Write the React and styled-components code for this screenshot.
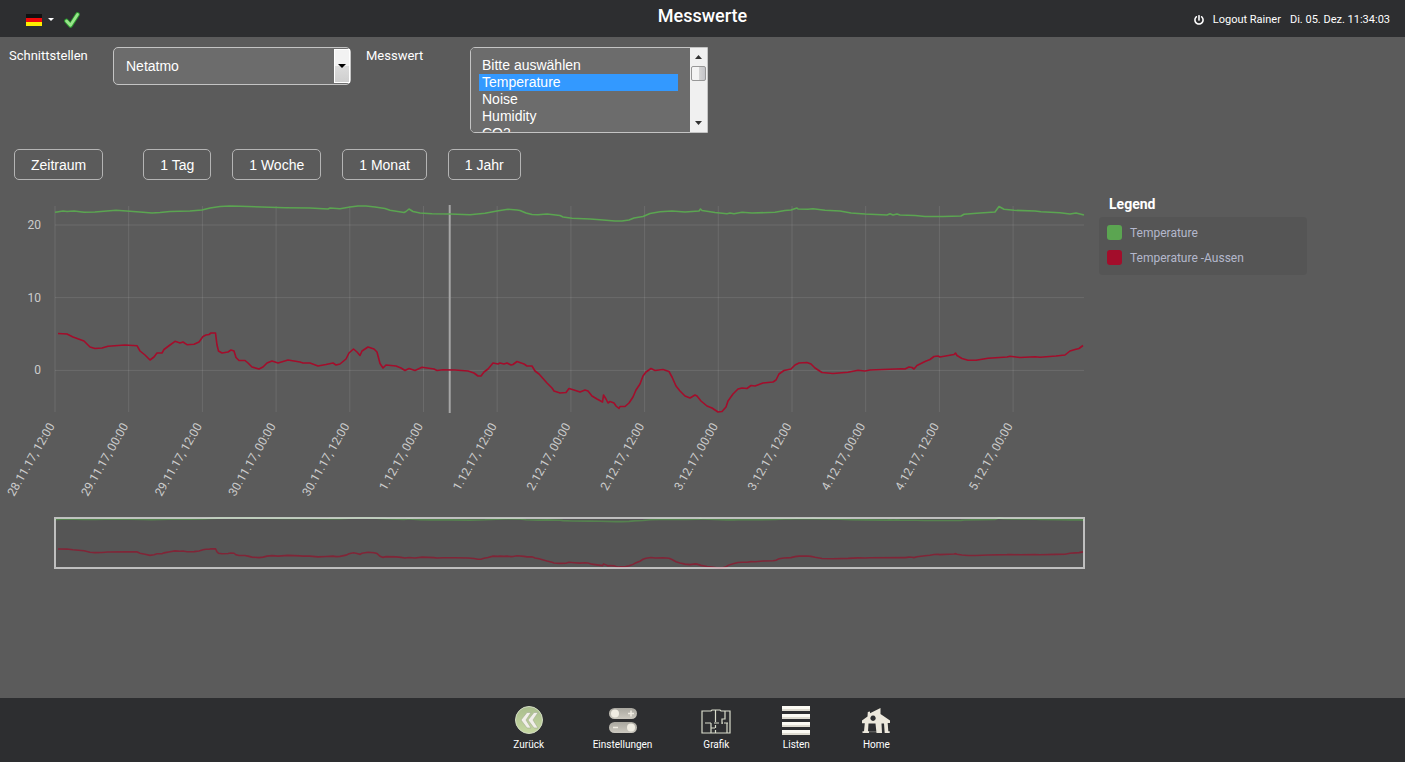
import React, { useState } from "react";
import styled, { createGlobalStyle } from "styled-components";
import { FaPowerOff } from "react-icons/fa";

const temperature =
  "55,17.3 57,17 63,16 67,16.5 74,16 84,17.3 95,17 116,15.3 130,16.3 143,17.3 152,18 160,17.5 170,16.5 190,16 202,15 210,13 220,11.5 230,11 240,11.3 262,12 285,12.7 310,13 328,14 330,13 340,13.7 350,12 358,11 366,11 375,12 385,13.5 390,15.3 404,17.5 406,16.5 409,14 413,16.5 420,18 432,18.7 450,19 470,19.7 485,18.3 497,16 508,14.3 517,15 520,15.5 526,18 532,19.5 538,19.7 547,19 560,20.5 563,22 572,23.3 590,24 600,24.7 615,26 622,26 629,25 634,23 643,21.5 650,18.5 660,16.7 672,16 685,17 699,16 700.5,14 702,15.5 715,17.5 727,18.7 730,18 734,18.7 742,17.3 752,18 775,17.3 785,15.5 791,15 797,13 798,14 808,14.3 813,13.7 825,15.2 840,16 851,18 865,19 887,20 890,18.7 893,20 897,19 900,20 915,20.5 925,21.5 943,21.5 961,21 964,19.3 980,18 995,17 999,11.5 1004,14.3 1014,15.3 1035,16 1041,16.8 1060,17.7 1070,19 1076,18 1084,20";

const outside =
  "58,138.5 67,139 73,142 84,146 90,152 95,153.5 102,153 108,151.3 125,150 137,150.7 140,156 145,160 150,165 154,162 157,158 162,158 164,154.5 170,150 175,146.3 180,148 183,147 187,149.7 194,149.3 199,147 203,141.5 206,140 209,139.5 211,138 215.5,138 217,150 218.5,156 222,158 228,157 231,155 234,156 236,162.5 239,165.5 245,165.5 248,168 252,172 259,174 263,172 267,168 272,166 278,168 288,165 300,167 303,168 310,168 318,171 326,169.5 333,168 336,170 340,169 346,164 349,158 353.5,154 357,157 360,160.5 362,156 368,152 374,154 377,157 380,168.5 383,173 386,170 396,171 401,173 405,175.5 409,173.5 415,175.5 422,172.3 434,174 437,175.5 443,174.8 455,175 468,176 474,178 478,181 481,181 484,177 488,174 493,168 498,169 500,168 504,169 507,168 511,170 513,169.5 517,166.5 524,169 527,171 532,171 535,176 539,179 547,188 552,193 554,196 560,198 566,197.5 569,193.5 574,195 580,197 585,195 588,196 592,201 597,204 602.5,207 603.5,200 606,204 608,208 610,206.5 614,208 616,211 619,213.5 620,211.5 625,211.5 629,208 633,202 636,195 640,189 643,181 646,177 651,173.5 655,175.5 663,174.5 669,176.5 672,182 676,191 680,196 685,201 690,203 695,200 697,201 701,206 707,211 712,213 718,217 722,216.5 726,212 728,206 733,199 738,194 742,193 747,193.5 751,190.5 755,191 763,188 773,187 776,185 779,179 784,175.5 791,174 795,170 799,168 807,167.5 811,169 815,173 822,177.5 833,178.5 848,177.3 858,175.3 865,176 870,175 902,173.7 905,174 909,172 912,172.5 914,174 917,170.5 925,166.5 930,164.5 934,161.5 938,161 940,162 954,159.5 955.5,158 957,160.5 962,163.5 968,165.3 976,165.3 988,163.3 1007,162 1010,161.3 1020,162.5 1035,161.7 1040,162.3 1056,161 1065,160 1070,156 1075,154.5 1079,153.5 1083,150.5";

const series = [
  { name: "Temperature", color: "#5ba551", points: temperature },
  { name: "Temperature -Aussen", color: "#a30d2b", points: outside },
];

const days = ["28.11.17", "29.11.17", "30.11.17", "1.12.17", "2.12.17", "3.12.17", "4.12.17", "5.12.17"];
const ticks = days
  .flatMap((day) => [`${day}, 00:00`, `${day}, 12:00`])
  .slice(1, 15)
  .map((label, i) => ({ label, x: 55 + i * 73.7 }));

const values = ["Bitte auswählen", "Temperature", "Noise", "Humidity", "CO2"];
const ranges = ["1 Tag", "1 Woche", "1 Monat", "1 Jahr"];

function Chart() {
  return (
    <Plot viewBox="0 0 1090 385" role="img" aria-label="Verlauf der Messwerte">
      <g stroke="#fff" strokeOpacity="0.1">
        {ticks.map((t) => (
          <line key={t.label} x1={t.x} x2={t.x} y1="11" y2="217" />
        ))}
        {[30, 102.6, 175.4].map((y) => (
          <line key={y} x1="55" x2="1084" y1={y} y2={y} />
        ))}
      </g>
      <line x1="449.7" x2="449.7" y1="10" y2="218" stroke="#a6a6a6" strokeWidth="2" />
      {series.map((s) => (
        <polyline key={s.name} points={s.points} fill="none" stroke={s.color} strokeWidth="1.6" strokeLinejoin="round" />
      ))}
      <AxisText>
        <text x="41" y="34">20</text>
        <text x="41" y="107">10</text>
        <text x="41" y="179">0</text>
        {ticks.map((t) => (
          <text key={t.label} transform={`translate(${t.x} 231) rotate(-60)`}>
            {t.label}
          </text>
        ))}
      </AxisText>

      {/* overview with the selected range */}
      <g transform="translate(0 320.3) scale(1 0.243)" opacity="0.65">
        {series.map((s) => (
          <polyline key={s.name} points={s.points} fill="none" stroke={s.color} strokeWidth="1.6" vectorEffect="non-scaling-stroke" />
        ))}
      </g>
      <rect x="55" y="323" width="1029" height="50" fill="#000" fillOpacity="0.06" stroke="#fff" strokeOpacity="0.62" strokeWidth="2" />
    </Plot>
  );
}

function BackIcon() {
  return (
    <svg width="30" height="30" viewBox="0 0 30 30">
      <defs>
        <linearGradient id="back" x2="0" y2="1">
          <stop offset="0" stopColor="#a9bd8d" />
          <stop offset="1" stopColor="#c6d8a2" />
        </linearGradient>
      </defs>
      <circle cx="15" cy="15" r="13.5" fill="url(#back)" stroke="#d3dcc4" />
      <path d="M13 7.500h4l-5 7.500 5 8h-4l-6-8zM20 7.500h4l-5 7.500 5 8h-4l-6-8z" fill="#f1efe9" stroke="#a3ad90" strokeWidth="0.6" />
    </svg>
  );
}

function SettingsIcon() {
  return (
    <svg width="30" height="30" viewBox="0 0 30 30">
      <defs>
        <linearGradient id="pill" x2="0" y2="1">
          <stop offset="0" stopColor="#a9a79f" />
          <stop offset="1" stopColor="#cbc8bf" />
        </linearGradient>
      </defs>
      <rect x="1" y="3" width="28" height="11" rx="5.5" fill="url(#pill)" />
      <rect x="1" y="17" width="28" height="11" rx="5.5" fill="url(#pill)" />
      <circle cx="7" cy="8.5" r="4" fill="#efece2" />
      <circle cx="23" cy="22.5" r="4" fill="#efece2" />
      <path d="M20 8.500h6M23 5.500v6M5 22.500h5" stroke="#efece2" strokeWidth="1.5" />
    </svg>
  );
}

function PlanIcon() {
  return (
    <svg width="30" height="30" viewBox="0 0 30 30" fill="none" stroke="#d9dccb" strokeWidth="1.2">
      <path d="M1 6h9l1-1h8l1 1h9v22H1z" />
      <path d="M14.500 5v12M14.500 20v1M24 6v8h-3v5M4 18h6M10 18v10M13 18h5M14.500 21v2M10 23h4M14.500 25v3M26 18v10M21 18h1M23 18h4" />
    </svg>
  );
}

function ListIcon() {
  return (
    <svg width="30" height="30" viewBox="0 0 30 30">
      {[1, 9, 17, 25].map((y) => (
        <g key={y}>
          <path d={`M1 ${y}h28v5H1z`} fill="#fbfaf3" />
          <path d={`M1 ${y + 3}h28v2H1z`} fill="#dedbd0" />
        </g>
      ))}
    </svg>
  );
}

function HomeIcon() {
  return (
    <svg width="30" height="30" viewBox="0 0 30 30" fill="#ece8dc">
      <path
        fillRule="evenodd"
        d="M19.500 3v6l9.500 6.500V18h-2.300l.6 8.200h1.400V28h-5L23 18.500h-2.500L21 28h-5.500l-1-9.500h-7L7 26.200h1V28H1.500v-1.800H3l.8-8H1V15.500l5.500-4L6.800 7l2.200-.6v1.800zM12 10.500a2.700 2.700 0 1 0 .1 0z"
      />
      <path d="M7 26.500h9v.7H7z" opacity="0.5" />
    </svg>
  );
}

const menu = [
  { label: "Zurück", icon: <BackIcon /> },
  { label: "Einstellungen", icon: <SettingsIcon /> },
  { label: "Grafik", icon: <PlanIcon /> },
  { label: "Listen", icon: <ListIcon /> },
  { label: "Home", icon: <HomeIcon /> },
];

function App() {
  const [source, setSource] = useState("Netatmo");
  const [selected, setSelected] = useState(["Temperature"]);

  const handleValues = (e) => {
    setSelected([...e.target.selectedOptions].map((o) => o.value));
  };

  return (
    <Page>
      <GlobalStyle />
      <Header>
        <HeaderLeft>
          <LanguageButton type="button" aria-label="Sprache">
            <svg width="16" height="12" viewBox="0 0 16 12">
              <path d="M0 0h16v4H0z" fill="#111" />
              <path d="M0 4h16v4H0z" fill="#f00a0a" />
              <path d="M0 8h16v4H0z" fill="#ffee00" />
            </svg>
            <Caret />
          </LanguageButton>
          <svg width="16" height="16" viewBox="0 0 16 16">
            <path d="M2.500 9L6.500 13.500 13.500 2.500" fill="none" stroke="#2c9a30" strokeWidth="4.6" strokeLinejoin="round" strokeLinecap="round" />
            <path d="M2.500 9L6.500 13.200 13.500 2.500" fill="none" stroke="#98e58a" strokeWidth="2.8" strokeLinejoin="round" strokeLinecap="round" />
          </svg>
        </HeaderLeft>
        <Title>Messwerte</Title>
        <HeaderRight>
          <Logout href="#logout">
            <FaPowerOff size={10} />
            Logout Rainer
          </Logout>
          <span>Di. 05. Dez. 11:34:03</span>
        </HeaderRight>
      </Header>

      <Main>
        <Filters>
          <Label htmlFor="source">Schnittstellen</Label>
          <Field>
            <Select id="source" value={source} onChange={(e) => setSource(e.target.value)}>
              <option>Netatmo</option>
            </Select>
            <SelectArrow>
              <svg width="8" height="4" viewBox="0 0 8 4">
                <path d="M0 0h8L4 4z" />
              </svg>
            </SelectArrow>
          </Field>
          <Label htmlFor="values">Messwert</Label>
          <Field>
            <ListBox id="values" multiple value={selected} onChange={handleValues}>
              {values.map((v) => (
                <option key={v}>{v}</option>
              ))}
            </ListBox>
            <Scrollbar aria-hidden="true">
              <svg width="7" height="4" viewBox="0 0 7 4">
                <path d="M0 4h7L3.500 0z" fill="#333" />
              </svg>
              <Thumb />
              <svg width="7" height="4" viewBox="0 0 7 4">
                <path d="M0 0h7L3.500 4z" fill="#333" />
              </svg>
            </Scrollbar>
          </Field>
        </Filters>

        <Ranges>
          <RangeButton type="button" $first>Zeitraum</RangeButton>
          {ranges.map((r) => (
            <RangeButton key={r} type="button">{r}</RangeButton>
          ))}
        </Ranges>

        <Content>
          <Chart />
          <Legend>
            <LegendTitle>Legend</LegendTitle>
            <LegendList>
              {series.map((s) => (
                <LegendItem key={s.name}>
                  <Swatch $color={s.color} />
                  {s.name}
                </LegendItem>
              ))}
            </LegendList>
          </Legend>
        </Content>
      </Main>

      <Footer>
        {menu.map((m) => (
          <MenuLink key={m.label} href={`#${m.label}`}>
            {m.icon}
            {m.label}
          </MenuLink>
        ))}
      </Footer>
    </Page>
  );
}

export default App;

const GlobalStyle = createGlobalStyle`
  * {
    box-sizing: border-box;
  }

  body {
    margin: 0;
    background: #5b5b5b;
    color: #fff;
    font-family: Roboto, sans-serif;
    font-size: 13px;
  }
`;

const Page = styled.div`
  display: flex;
  flex-direction: column;
  min-height: 100vh;
`;

const Header = styled.header`
  display: grid;
  grid-template-columns: 1fr auto 1fr;
  height: 37px;
  background: #2d2e30;
`;

const HeaderLeft = styled.div`
  display: flex;
  align-items: center;
  gap: 10px;
  padding: 2px 0 0 26px;
`;

const LanguageButton = styled.button`
  display: flex;
  align-items: center;
  gap: 6px;
  padding: 0;
  border: 0;
  background: none;
`;

const Caret = styled.span`
  border: 3px solid transparent;
  border-top-color: #fff;
  border-bottom: 0;
`;

const Title = styled.h1`
  margin: 0;
  font-size: 18px;
  font-weight: 500;
  line-height: 32px;
`;

const HeaderRight = styled.div`
  display: flex;
  align-items: center;
  justify-content: flex-end;
  gap: 9px;
  padding: 2px 15px 0 0;
  font-size: 11px;
`;

const Logout = styled.a`
  display: flex;
  align-items: center;
  gap: 9px;
  color: #fff;
  text-decoration: none;
`;

const Main = styled.main`
  flex: 1;
`;

const Filters = styled.div`
  display: grid;
  grid-template-columns: 89px 238px 89px 238px;
  column-gap: 15px;
  align-items: start;
  padding: 10px 9px 0;
`;

const Label = styled.label`
  line-height: 18px;
`;

const Field = styled.div`
  position: relative;
`;

const Select = styled.select`
  display: block;
  width: 100%;
  height: 38px;
  padding: 0 12px;
  appearance: none;
  border: 1px solid #c4c4c4;
  border-radius: 5px;
  background: #6c6c6c;
  color: #fff;
  font: 14px "Liberation Sans", sans-serif;
`;

const SelectArrow = styled.span`
  position: absolute;
  top: 2px;
  right: 1px;
  bottom: 2px;
  display: flex;
  align-items: center;
  justify-content: center;
  width: 16px;
  border: 1px solid #fff;
  background: linear-gradient(#f2f2f2 50%, #dcdcdc 50%, #cfcfcf);
  pointer-events: none;
`;

const ListBox = styled.select`
  display: block;
  width: 100%;
  height: 86px;
  padding: 9px 29px 0 8px;
  border: 1px solid #c4c4c4;
  border-radius: 5px 0 0 5px;
  background: #6c6c6c;
  color: #fff;
  font: 14px "Liberation Sans", sans-serif;
  scrollbar-width: none;
  outline: none;

  option {
    height: 17px;
    min-height: 17px;
    padding: 0 3px;
    line-height: 17px;
  }

  option:checked {
    background: linear-gradient(#3399ff, #3399ff);
    color: #fff;
  }
`;

const Scrollbar = styled.span`
  position: absolute;
  top: 1px;
  right: 1px;
  bottom: 1px;
  display: flex;
  flex-direction: column;
  align-items: center;
  width: 17px;
  padding: 7px 0;
  background: #f0f0f0;
  pointer-events: none;

  & > :last-child {
    margin-top: auto;
  }
`;

const Thumb = styled.span`
  width: 15px;
  height: 15px;
  margin-top: 7px;
  border: 1px solid #979797;
  border-radius: 2px;
  background: linear-gradient(90deg, #f4f4f4 50%, #d6d6d6 50%, #c4c4c8);
`;

const Ranges = styled.div`
  display: flex;
  flex-wrap: wrap;
  gap: 21px;
  padding: 16px 14px 0;
`;

const RangeButton = styled.button`
  height: 31px;
  margin-right: ${({ $first }) => ($first ? "19px" : "0")};
  padding: 0 16px;
  border: 1px solid #b4b4b4;
  border-radius: 5px;
  background: none;
  color: #fff;
  font: 14px "Liberation Sans", sans-serif;
`;

const Content = styled.div`
  display: flex;
  align-items: flex-start;
  gap: 9px;
  padding-top: 15px;
`;

const Plot = styled.svg`
  flex: 0 1 1090px;
  min-width: 0;
`;

const AxisText = styled.g`
  fill: #ccc;
  font-size: 12px;
  text-anchor: end;
`;

const Legend = styled.aside`
  flex: 0 0 208px;
`;

const LegendTitle = styled.h2`
  margin: 0;
  padding-left: 10px;
  font-size: 14px;
  font-weight: 700;
  line-height: 18px;
`;

const LegendList = styled.ul`
  display: grid;
  gap: 10px;
  margin: 4px 0 0;
  padding: 8px 8px 10px;
  border-radius: 4px;
  background: #555;
  list-style: none;
`;

const LegendItem = styled.li`
  display: flex;
  align-items: center;
  gap: 8px;
  color: #b4b8cc;
  font-size: 12px;
  line-height: 16px;
  height: 15px;
`;

const Swatch = styled.span`
  width: 15px;
  height: 15px;
  border-radius: 3px;
  background: ${({ $color }) => $color};
`;

const Footer = styled.footer`
  display: flex;
  justify-content: center;
  height: 64px;
  padding-top: 7px;
  background: #2d2e30;
`;

const MenuLink = styled.a`
  display: flex;
  flex-direction: column;
  align-items: center;
  gap: 4px;
  min-width: 80px;
  padding: 0 24px;
  color: #fff;
  font-size: 10px;
  line-height: 12px;
  text-decoration: none;
`;
